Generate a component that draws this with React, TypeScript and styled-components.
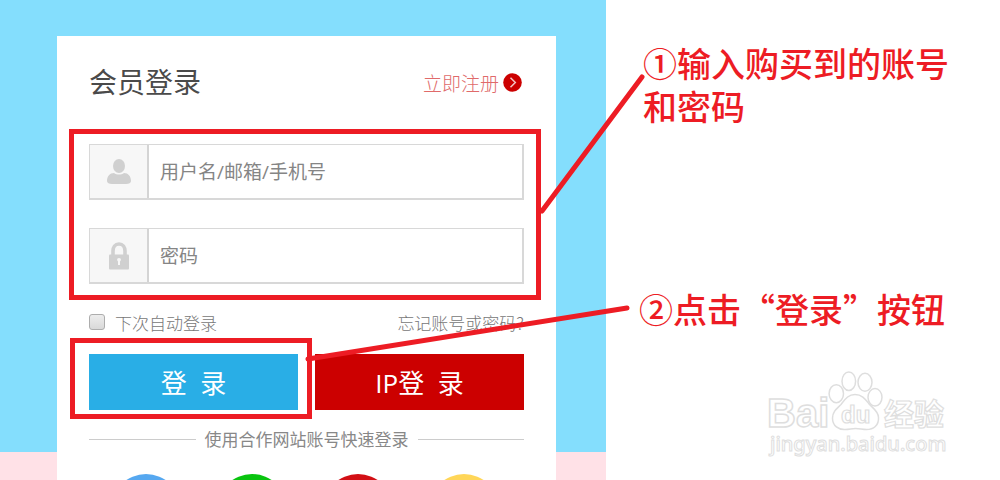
import React from "react";
import styled, { createGlobalStyle } from "styled-components";

const GlobalStyle = createGlobalStyle`
  *, *::before, *::after { box-sizing: border-box; }
  body {
    margin: 0;
    background: #fff;
    font-family: "Noto Sans CJK SC", "Liberation Sans", sans-serif;
  }
`;

const Page = styled.div`
  position: relative;
  display: grid;
  grid-template-columns: minmax(0, 20fr) minmax(0, 13fr);
  grid-template-rows: minmax(0, 1fr);
  height: 100vh;
  overflow: hidden;
`;

const Banner = styled.main`
  padding: 36px 50px 0 57px;
  background: linear-gradient(#84defd 452px, #ffe1e7 452px);
`;

const Card = styled.form`
  height: 100%;
  background: #fff;
`;

const Header = styled.header`
  display: flex;
  align-items: center;
  justify-content: space-between;
  height: 93px;
  padding: 0 34px 0 32px;
`;

const Title = styled.h1`
  margin: 0;
  padding-bottom: 4px;
  font-size: 28px;
  font-weight: 400;
  line-height: 40px;
  color: #4a4a4a;
`;

const RegisterLink = styled.a`
  display: flex;
  align-items: center;
  gap: 4px;
  font-size: 19px;
  font-weight: 300;
  color: #e06a6a;
  text-decoration: none;
`;

const CredentialsFrame = styled.div`
  display: grid;
  gap: 28px;
  margin: 0 15px 0 12px;
  padding: 10px 12px 11px 15px;
  border: 5px solid #ed1c24;
`;

const Field = styled.label`
  display: flex;
  height: 56px;
  border: solid #d8d8d8;
  border-width: 1px 2px 2px 1px;
`;

const FieldIcon = styled.span`
  display: flex;
  align-items: center;
  justify-content: center;
  flex: 0 0 59px;
  border-right: 2px solid #d4d4d4;
  background: #f7f7f7;
`;

const FieldInput = styled.input`
  flex: 1;
  min-width: 0;
  padding: 0 11px;
  border: 0;
  outline: 0;
  background: #fff;
  font: 400 19px "Open Sans", "Noto Sans CJK SC", sans-serif;
  color: #444;
  &::placeholder { color: #858585; opacity: 1; }
`;

const Options = styled.div`
  display: flex;
  align-items: center;
  justify-content: space-between;
  height: 44px;
  margin-bottom: 10px;
  padding: 0 32px;
  font-size: 17px;
  font-weight: 300;
  color: #777;
`;

const Remember = styled.label`
  display: flex;
  align-items: center;
  gap: 10px;
`;

const Checkbox = styled.input`
  appearance: none;
  width: 16px;
  height: 16px;
  margin: 0;
  border: 1px solid #adadad;
  border-radius: 3px;
  background: linear-gradient(#ededed, #d9d9d9);
  &:checked { background: #29aee6; }
`;

const ForgotLink = styled.a`
  color: inherit;
  text-decoration: none;
`;

const Actions = styled.div`
  display: grid;
  grid-template-columns: 1fr 1fr;
  gap: 17px;
  padding: 0 32px;
`;

const MarkedAction = styled.div`
  position: relative;
  display: grid;
  &::after {
    content: "";
    position: absolute;
    inset: -16px -14px -9px -19px;
    border: 5px solid #ed1c24;
    pointer-events: none;
  }
`;

const ActionButton = styled.button<{ $color: string }>`
  height: 56px;
  padding: 0;
  border: 0;
  background: ${(p) => p.$color};
  color: #fff;
  font: 400 26px "Open Sans", "Noto Sans CJK SC", sans-serif;
  white-space: pre;
  cursor: pointer;
`;

const Divider = styled.div`
  display: flex;
  align-items: center;
  gap: 9px;
  margin: 17px 32px 23px;
  font-size: 17px;
  line-height: 24px;
  font-weight: 400;
  color: #888;
  white-space: nowrap;
  &::before, &::after {
    content: "";
    flex: 1;
    height: 1px;
    background: #ccc;
  }
`;

const Partners = styled.nav`
  display: flex;
  justify-content: space-between;
  padding: 0 57px 0 54px;
`;

const Partner = styled.a<{ $color: string }>`
  width: 70px;
  height: 70px;
  border-radius: 50%;
  background: ${(p) => p.$color};
`;

const Notes = styled.aside`
  padding: 41px 20px 10px 33px;
`;

const Note = styled.p`
  margin: 0 0 39px;
  font-size: 34px;
  line-height: 43px;
  font-weight: 500;
  color: #ed1c24;
  white-space: nowrap;
`;

const FirstNote = styled(Note)`
  margin-bottom: 160px;
  padding-left: 4px;
`;

const Watermark = styled.svg`
  display: block;
  margin: 0 30px 0 auto;
`;

const Pointers = styled.svg`
  position: absolute;
  top: 0;
  left: 0;
  width: 100%;
  height: 480px;
  pointer-events: none;
`;

const UserIcon = () => (
  <svg width="26" height="26" viewBox="0 0 26 26" fill="#d0d0d0" aria-hidden="true">
    <ellipse cx="13" cy="7" rx="6" ry="7" />
    <path d="M1 22c0-5 3-8 7-8 3 2 7 2 10 0 4 0 7 3 7 8 0 2-2 3-5 3H6c-3 0-5-1-5-3z" />
  </svg>
);

const LockIcon = () => (
  <svg width="20" height="28" viewBox="0 0 20 28" aria-hidden="true">
    <path d="M4 13V9c0-4 2-7 6-7s6 3 6 7v4" fill="none" stroke="#d0d0d0" strokeWidth="3.6" />
    <rect y="12.500" width="20" height="15" rx="1" fill="#d0d0d0" />
    <path d="M8 18a2 2 0 1 1 4 0l-1 1.500V23H9v-3.500z" fill="#f7f7f7" />
  </svg>
);

const ArrowIcon = () => (
  <svg width="19" height="19" viewBox="0 0 19 19" aria-hidden="true">
    <circle cx="9.500" cy="9.500" r="9.300" fill="#c00" />
    <path d="M7.500 4.800 12.300 9.500 7.500 14.200" fill="none" stroke="#f3c6c6" strokeWidth="1.500" />
  </svg>
);

const BaiduMark = () => (
  <Watermark width="184" height="98" viewBox="15 10 184 98" fill="#fff" stroke="#dedede" strokeWidth="1.500">
    <text x="16" y="68" fontFamily="Liberation Sans, sans-serif" fontWeight="700" fontSize="40">Bai</text>
    <ellipse cx="85.300" cy="34.700" rx="7.200" ry="9" />
    <ellipse cx="97.800" cy="22.200" rx="6.800" ry="9.300" />
    <ellipse cx="114" cy="23.300" rx="7" ry="9" />
    <ellipse cx="124" cy="38.300" rx="7" ry="8.700" />
    <path d="M104 35.500c-7 0-10 5-14 10-4 4-8.500 7-8.500 13.500 0 8 6 12 13 11.500 4 0 6-1 10-1s7 1 11 1c7 0 12.500-4 12-12 0-6-5-9-9-13-4-5-7-10-14.500-10z" />
    <text x="90" y="64" fontFamily="Liberation Sans, sans-serif" fontWeight="700" fontSize="24" strokeWidth="1.200">du</text>
    <text x="133" y="66" fontFamily="Noto Sans CJK SC, sans-serif" fontWeight="700" fontSize="30" strokeWidth="1.200">经验</text>
    <text x="19" y="92" fontFamily="Noto Sans, sans-serif" fontWeight="500" fontSize="20" strokeWidth="1">jingyan.baidu.com</text>
  </Watermark>
);

export default function App() {
  return (
    <Page lang="zh-CN">
      <GlobalStyle />
      <Banner>
        <Card onSubmit={(e: React.FormEvent) => e.preventDefault()}>
          <Header>
            <Title>会员登录</Title>
            <RegisterLink href="#register">
              立即注册
              <ArrowIcon />
            </RegisterLink>
          </Header>
          <CredentialsFrame>
            <Field>
              <FieldIcon><UserIcon /></FieldIcon>
              <FieldInput type="text" aria-label="用户名" placeholder="用户名/邮箱/手机号" />
            </Field>
            <Field>
              <FieldIcon><LockIcon /></FieldIcon>
              <FieldInput type="password" aria-label="密码" placeholder="密码" />
            </Field>
          </CredentialsFrame>
          <Options>
            <Remember>
              <Checkbox type="checkbox" />
              下次自动登录
            </Remember>
            <ForgotLink href="#forgot">忘记账号或密码?</ForgotLink>
          </Options>
          <Actions>
            <MarkedAction>
              <ActionButton type="submit" $color="#29aee6">{"登  录"}</ActionButton>
            </MarkedAction>
            <ActionButton type="button" $color="#cc0000">{"IP登  录"}</ActionButton>
          </Actions>
          <Divider>使用合作网站账号快速登录</Divider>
          <Partners>
            <Partner href="#qq" aria-label="QQ" $color="#56a8f0" />
            <Partner href="#wechat" aria-label="微信" $color="#09c40f" />
            <Partner href="#weibo" aria-label="微博" $color="#d20f15" />
            <Partner href="#qzone" aria-label="QQ空间" $color="#ffd658" />
          </Partners>
        </Card>
      </Banner>
      <Notes>
        <FirstNote>
          ①输入购买到的账号
          <br />
          和密码
        </FirstNote>
        <Note>②点击“登录”按钮</Note>
        <BaiduMark />
      </Notes>
      <Pointers viewBox="0 0 1000 480" preserveAspectRatio="none" stroke="#ed1c24" strokeWidth="5" strokeLinecap="round" aria-hidden="true">
        <line x1="542" y1="211" x2="642" y2="77" vectorEffect="non-scaling-stroke" />
        <line x1="308" y1="359" x2="627" y2="308" vectorEffect="non-scaling-stroke" />
      </Pointers>
    </Page>
  );
}
